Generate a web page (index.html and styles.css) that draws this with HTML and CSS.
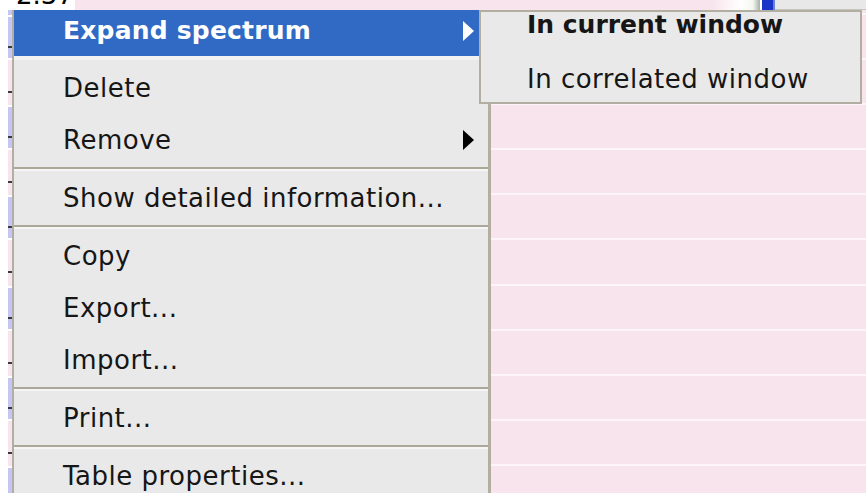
FILE: index.html
```html
<!DOCTYPE html>
<html lang="en">
<head>
<meta charset="utf-8">
<title>Peak table</title>
<link rel="stylesheet" href="styles.css">
</head>
<body>
<div class="screen">
  <div class="sheet">
    <div class="head">
      <div class="head-num"><span class="head-value">2.37</span></div>
      <div class="head-fill"></div>
      <div class="head-fade"></div>
      <div class="head-scale"></div>
      <div class="head-panel"></div>
    </div>
    <div class="rows">
      <div class="row row-top"><div class="gutter"></div><div class="cell"></div></div>
      <div class="row odd"><div class="gutter"><i class="tick"></i></div><div class="cell"></div></div>
      <div class="row"><div class="gutter"><i class="tick"></i></div><div class="cell"></div></div>
      <div class="row odd"><div class="gutter"><i class="tick"></i></div><div class="cell"></div></div>
      <div class="row"><div class="gutter"><i class="tick"></i></div><div class="cell"></div></div>
      <div class="row odd"><div class="gutter"><i class="tick"></i></div><div class="cell"></div></div>
      <div class="row"><div class="gutter"><i class="tick"></i></div><div class="cell"></div></div>
      <div class="row odd"><div class="gutter"><i class="tick"></i></div><div class="cell"></div></div>
      <div class="row"><div class="gutter"><i class="tick"></i></div><div class="cell"></div></div>
      <div class="row odd"><div class="gutter"><i class="tick"></i></div><div class="cell"></div></div>
      <div class="row"><div class="gutter"><i class="tick"></i></div><div class="cell"></div></div>
      <div class="row odd"><div class="gutter"><i class="tick"></i></div><div class="cell"></div></div>
    </div>
  </div>

  <div class="menu">
    <div class="item active">
      <span class="label bold">Expand spectrum</span>
      <svg class="arrow" width="11" height="20" viewBox="0 0 11 20"><polygon points="0,0 11,10 0,20" fill="#ffffff"/></svg>
    </div>
    <div class="gap"></div>
    <div class="item"><span class="label">Delete</span></div>
    <div class="item">
      <span class="label">Remove</span>
      <svg class="arrow" width="11" height="20" viewBox="0 0 11 20"><polygon points="0,0 11,10 0,20" fill="#000000"/></svg>
    </div>
    <div class="sep"></div>
    <div class="item"><span class="label">Show detailed information...</span></div>
    <div class="sep"></div>
    <div class="item"><span class="label">Copy</span></div>
    <div class="item"><span class="label">Export...</span></div>
    <div class="item"><span class="label">Import...</span></div>
    <div class="sep"></div>
    <div class="item"><span class="label">Print...</span></div>
    <div class="sep"></div>
    <div class="item"><span class="label">Table properties...</span></div>
  </div>

  <div class="submenu">
    <div class="sub-item bold">In current window</div>
    <div class="sub-item">In correlated window</div>
  </div>
</div>
</body>
</html>
```

FILE: styles.css
```css
html, body {
  margin: 0;
  padding: 0;
}

body {
  width: 866px;
  height: 493px;
  overflow: hidden;
  background: #f8e4ec;
  font-family: "DejaVu Sans", "Liberation Sans", sans-serif;
  color: #161616;
}

.screen {
  position: relative;
  width: 866px;
  height: 493px;
  overflow: hidden;
}

/* table in the background */
.sheet {
  display: flex;
  flex-direction: column;
  width: 100%;
  height: 100%;
}

.head {
  display: flex;
  height: 10px;
  flex: none;
}

.head-num {
  width: 75px;
  background: #ffffff;
  overflow: hidden;
  padding-left: 16px;
  box-sizing: border-box;
}

.head-value {
  display: block;
  font-size: 26px;
  line-height: 26px;
  margin-top: -18px;
  color: #000;
}

.head-fill {
  flex: 1;
  background: #f8e4ec;
}

.head-fade {
  width: 48px;
  background: linear-gradient(to right, #f8e4ec, #ffffff 60%, #f4f8f0 85%, #a8b0a8);
}

.head-scale {
  width: 15px;
  background: linear-gradient(to right, #ffffff 0 2px, #1a34c8 2px 13px, #7080d0 13px);
}

.head-panel {
  width: 91px;
  background: #e8e8e8;
  border-bottom: 1px solid #c8c6bc;
  box-sizing: border-box;
}

.rows {
  display: flex;
  flex-direction: column;
}

.row {
  display: flex;
  height: 45.1px;
  flex: none;
}

.row-top {
  height: 5px;
}

.gutter {
  width: 12px;
  flex: none;
  position: relative;
  background: linear-gradient(to right, #ffffff 0 8px, transparent 8px);
}

.row.odd .gutter {
  background: linear-gradient(to bottom, #ffffff 0 2px, transparent 2px 43px, #ffffff 43px),
              linear-gradient(to right, #ffffff 0 8px, #c6c6f4 8px);
}

.row-top .gutter {
  background: linear-gradient(to right, #ffffff 0 8px, #c6c6f4 8px);
}

.tick {
  position: absolute;
  left: 8px;
  top: 31px;
  width: 4px;
  height: 2px;
  background: #3a3a3a;
}

.cell {
  flex: 1;
  background: #f8e4ec;
  border-bottom: 2px solid #fdf5f8;
  box-sizing: border-box;
}

/* popup menu */
.menu {
  position: absolute;
  left: 12px;
  top: 10px;
  width: 479px;
  height: 500px;
  box-sizing: border-box;
  background: #e9e9e9;
  border-left: 2px solid #b2aea2;
  border-right: 3px solid #b2aea2;
  display: flex;
  flex-direction: column;
}

.item {
  height: 52px;
  flex: none;
  display: flex;
  align-items: center;
  justify-content: space-between;
  padding: 0 14px 0 49px;
  font-size: 26px;
  letter-spacing: 0.5px;
}

.item.active {
  height: 46px;
  background: #316ac5;
  color: #ffffff;
  padding-bottom: 5px;
  box-sizing: border-box;
  letter-spacing: 0.2px;
}

.label.bold {
  font-size: 25px;
}

.bold {
  font-weight: bold;
}

.gap {
  height: 6px;
  flex: none;
  background: linear-gradient(to bottom, #f2f2f2 0 4px, #e9e9e9 4px);
}

.sep {
  height: 6px;
  flex: none;
  box-sizing: border-box;
  padding-top: 1px;
  background: linear-gradient(to bottom, #e9e9e9 0 1px, #aca899 1px 3px, #f6f6f6 3px 5px, #e9e9e9 5px);
}

.arrow {
  flex: none;
  display: block;
}

/* cascading submenu */
.submenu {
  position: absolute;
  left: 479px;
  top: 10px;
  width: 383px;
  height: 94px;
  box-sizing: border-box;
  background: #e9e9e9;
  border: 2px solid #b2aea2;
  padding: 0 0 0 46px;
  display: flex;
  flex-direction: column;
  gap: 24px;
}

.sub-item {
  font-size: 26px;
  line-height: 30px;
  height: 30px;
  letter-spacing: 0.5px;
}

.sub-item.bold {
  font-size: 25px;
  margin-top: -2px;
  letter-spacing: 0;
}
```
